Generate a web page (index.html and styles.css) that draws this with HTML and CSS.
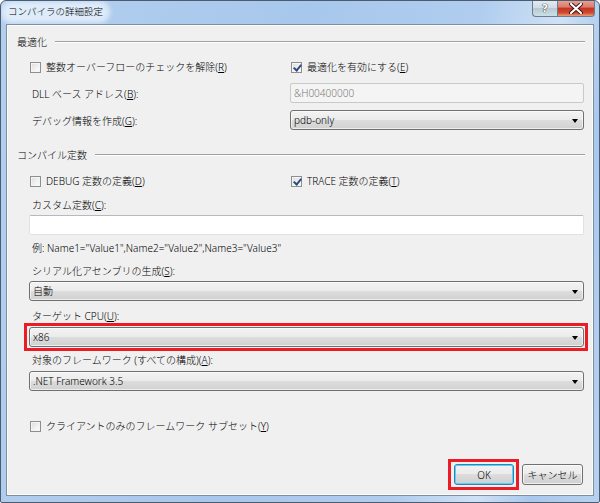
FILE: index.html
```html
<!DOCTYPE html>
<html lang="ja">
<head>
    <meta charset="UTF-8">
    <title>コンパイラの詳細設定</title>
    <link rel="stylesheet" href="styles.css">
</head>
<body>
    <div class="window">
        <div class="titlebar">
            <span class="title">コンパイラの詳細設定</span>
            <div class="caption-buttons">
                <span class="cap-btn help">?</span>
                <span class="cap-btn close">
                    <svg width="14" height="11" viewBox="0 0 14 11">
                        <path d="M2 1 L12 10 M12 1 L2 10" stroke="#3a1010" stroke-width="4" stroke-linecap="round"/>
                        <path d="M2 1 L12 10 M12 1 L2 10" stroke="#ffffff" stroke-width="2.2" stroke-linecap="round"/>
                    </svg>
                </span>
            </div>
        </div>
        <div class="client">
            <div class="group-title"><span>最適化</span></div>

            <div class="row two-col check-line r1">
                <label class="check-label"><span class="check"></span>整数オーバーフローのチェックを解除(<u>R</u>)</label>
                <label class="check-label"><span class="check checked"></span>最適化を有効にする(<u>E</u>)</label>
            </div>
            <div class="row two-col field-line r2">
                <span class="text">DLL ベース アドレス(<u>B</u>):</span>
                <div class="textbox disabled">&amp;H00400000</div>
            </div>
            <div class="row two-col field-line r3">
                <span class="text">デバッグ情報を作成(<u>G</u>):</span>
                <div class="combo">pdb-only<span class="arrow"></span></div>
            </div>

            <div class="group-title g2"><span>コンパイル定数</span></div>

            <div class="row two-col check-line r4">
                <label class="check-label"><span class="check"></span>DEBUG 定数の定義(<u>D</u>)</label>
                <label class="check-label"><span class="check checked"></span>TRACE 定数の定義(<u>T</u>)</label>
            </div>
            <div class="row label-line r5"><span class="text">カスタム定数(<u>C</u>):</span></div>
            <div class="row r6"><div class="textbox"></div></div>
            <div class="row label-line r7"><span class="text">例: Name1="Value1",Name2="Value2",Name3="Value3"</span></div>
            <div class="row label-line r8"><span class="text">シリアル化アセンブリの生成(<u>S</u>):</span></div>
            <div class="row r9"><div class="combo">自動<span class="arrow"></span></div></div>
            <div class="row label-line r10"><span class="text">ターゲット CPU(<u>U</u>):</span></div>
            <div class="row r11">
                <div class="highlight wide">
                    <div class="combo">x86<span class="arrow"></span></div>
                </div>
            </div>
            <div class="row label-line r12"><span class="text">対象のフレームワーク (すべての構成)(<u>A</u>):</span></div>
            <div class="row r13"><div class="combo">.NET Framework 3.5<span class="arrow"></span></div></div>
            <div class="row check-line r14">
                <label class="check-label"><span class="check"></span>クライアントのみのフレームワーク サブセット(<u>Y</u>)</label>
            </div>

            <div class="buttons">
                <div class="highlight ok-wrap">
                    <button class="btn default">OK</button>
                </div>
                <button class="btn">キャンセル</button>
            </div>
        </div>
    </div>
</body>
</html>
```

FILE: styles.css
```css
body {
    margin: 0;
    font-family: "Noto Sans", "Noto Sans CJK JP", sans-serif;
    font-size: 10px;
    font-weight: 300;
    color: #000;
    background: #ffffff;
}
.window {
    width: 600px;
    height: 503px;
    box-sizing: border-box;
    border: 1px solid #4b5c70;
    border-radius: 6px 6px 2px 2px;
    background: linear-gradient(100deg, #b3cfee 0%, #a7c7ec 45%, #b0cdef 70%, #cfe1f5 82%, #a9c8ee 90%, #b7d2f0 100%);
    display: flex;
    flex-direction: column;
    overflow: hidden;
}
.titlebar {
    height: 23px;
    display: flex;
    align-items: flex-start;
    justify-content: space-between;
    flex-shrink: 0;
}
.title {
    margin: 4px 0 0 4px;
    padding: 0 3px;
    font-size: 9.5px;
    line-height: 14px;
    color: #000;
    background: rgba(238, 245, 253, 0.75);
    border-radius: 8px;
    box-shadow: 0 0 5px 4px rgba(238, 245, 253, 0.75);
}
.caption-buttons {
    display: flex;
    margin-right: 4px;
    margin-top: -1px;
}
.cap-btn {
    height: 17px;
    display: flex;
    align-items: center;
    justify-content: center;
    border: 1px solid #6d7c8c;
    border-top: none;
    box-sizing: border-box;
}
.help {
    width: 25px;
    border-radius: 0 0 0 4px;
    border-right: none;
    background: linear-gradient(#e4ebf2 0%, #d2dce6 50%, #b9c7d3 51%, #c8e2e6 100%);
    color: #fff;
    font-family: "DejaVu Sans", sans-serif;
    font-weight: bold;
    font-size: 11px;
    text-shadow: 0 0 1px #222, 0 0 1px #222;
}
.close {
    width: 38px;
    border-radius: 0 0 4px 0;
    background: linear-gradient(#e7a899 0%, #d77b6b 45%, #c53222 50%, #d04a2f 80%, #e8a07a 100%);
}
.client {
    flex: 1;
    margin: 0 5px 6px 5px;
    border: 1px solid #7f8f9f;
    background: #f0f0f0;
    box-shadow: inset 0 0 0 1px #fbfbfb;
    padding: 9px 9px 0 10px;
    display: flex;
    flex-direction: column;
}
.group-title {
    height: 16px;
    display: flex;
    align-items: center;
    margin-right: -1px;
}
.group-title span {
    line-height: 16px;
    padding-right: 8px;
}
.group-title::after {
    content: "";
    flex: 1;
    height: 0;
    border-top: 1px solid #a0a0a0;
    border-bottom: 1px solid #ffffff;
}
.row {
    margin-left: 12px;
}
.two-col {
    display: grid;
    grid-template-columns: 261px 1fr;
    align-items: center;
}
.check-line {
    height: 16px;
    line-height: 16px;
}
.field-line {
    height: 20px;
}
.label-line {
    height: 16px;
    line-height: 16px;
}
.text {
    padding-left: 3px;
    white-space: nowrap;
}
.check-label {
    display: flex;
    align-items: center;
    white-space: nowrap;
}
.check {
    width: 11px;
    height: 11px;
    box-sizing: border-box;
    margin: 0 5px 0 1px;
    border: 1px solid #8e8f8f;
    background: linear-gradient(135deg, #dcdcdc 0%, #f2f2f2 60%, #ffffff 100%);
    box-shadow: inset 0 0 0 1px #f4f4f4;
    position: relative;
}
.check.checked::after {
    content: "";
    position: absolute;
    left: 3px;
    top: 0px;
    width: 3px;
    height: 6px;
    border-right: 2px solid #2d4c80;
    border-bottom: 2px solid #2d4c80;
    transform: rotate(40deg);
}
.textbox {
    height: 20px;
    box-sizing: border-box;
    background: #ffffff;
    border: 1px solid #dfe3e8;
    border-top-color: #b5b9c0;
    border-radius: 2px;
    line-height: 18px;
    padding-left: 3px;
}
.textbox.disabled {
    background: #f4f4f4;
    border-color: #c9c9c9;
    color: #7a7a7a;
}
.combo {
    height: 20px;
    box-sizing: border-box;
    border: 1px solid #707070;
    border-radius: 3px;
    background: linear-gradient(#f3f3f3 0%, #ebebeb 49%, #dddddd 50%, #d1d1d1 100%);
    line-height: 18px;
    padding-left: 3px;
    position: relative;
    box-shadow: inset 0 0 0 1px rgba(255, 255, 255, 0.6);
}
.arrow {
    position: absolute;
    right: 5px;
    top: 8px;
    width: 0;
    height: 0;
    border-left: 3px solid transparent;
    border-right: 3px solid transparent;
    border-top: 4px solid #000;
}
.highlight {
    border: 3px solid #ec1c24;
}
.highlight.wide {
    margin: -1px -4px 0 -5px;
    padding: 1px 1px 1px 2px;
}

/* vertical rhythm, matched to the dialog */
.r1 { margin-top: 9px; }
.r2 { margin-top: 8px; }
.r3 { margin-top: 7px; }
.g2 { margin-top: 17px; }
.r4 { margin-top: 10px; }
.r5 { margin-top: 8px; }
.r6 { margin-top: 2px; }
.r7 { margin-top: 5px; }
.r8 { margin-top: 7px; }
.r9 { margin-top: 2px; }
.r10 { margin-top: 7px; }
.r11 { margin-top: 0; }
.r12 { margin-top: 1px; }
.r13 { margin-top: 3px; }
.r14 { margin-top: 27px; }

.buttons {
    margin-top: auto;
    margin-bottom: 5px;
    display: flex;
    justify-content: flex-end;
    align-items: center;
    gap: 3px;
    margin-right: 1px;
}
.ok-wrap {
    padding: 2px 2px 2px 3px;
}
.btn {
    height: 21px;
    font-family: inherit;
    font-size: 10px;
    font-weight: 300;
    color: #000;
    border: 1px solid #707070;
    border-radius: 3px;
    background: linear-gradient(#f2f2f2 0%, #ebebeb 49%, #dddddd 50%, #cfcfcf 100%);
    box-shadow: inset 0 0 0 1px rgba(255, 255, 255, 0.7);
    padding: 0;
    width: 61px;
}
.btn.default {
    width: 60px;
    border-color: #3c7fb1;
    box-shadow: inset 0 0 0 1px #48d8fb;
}
```
